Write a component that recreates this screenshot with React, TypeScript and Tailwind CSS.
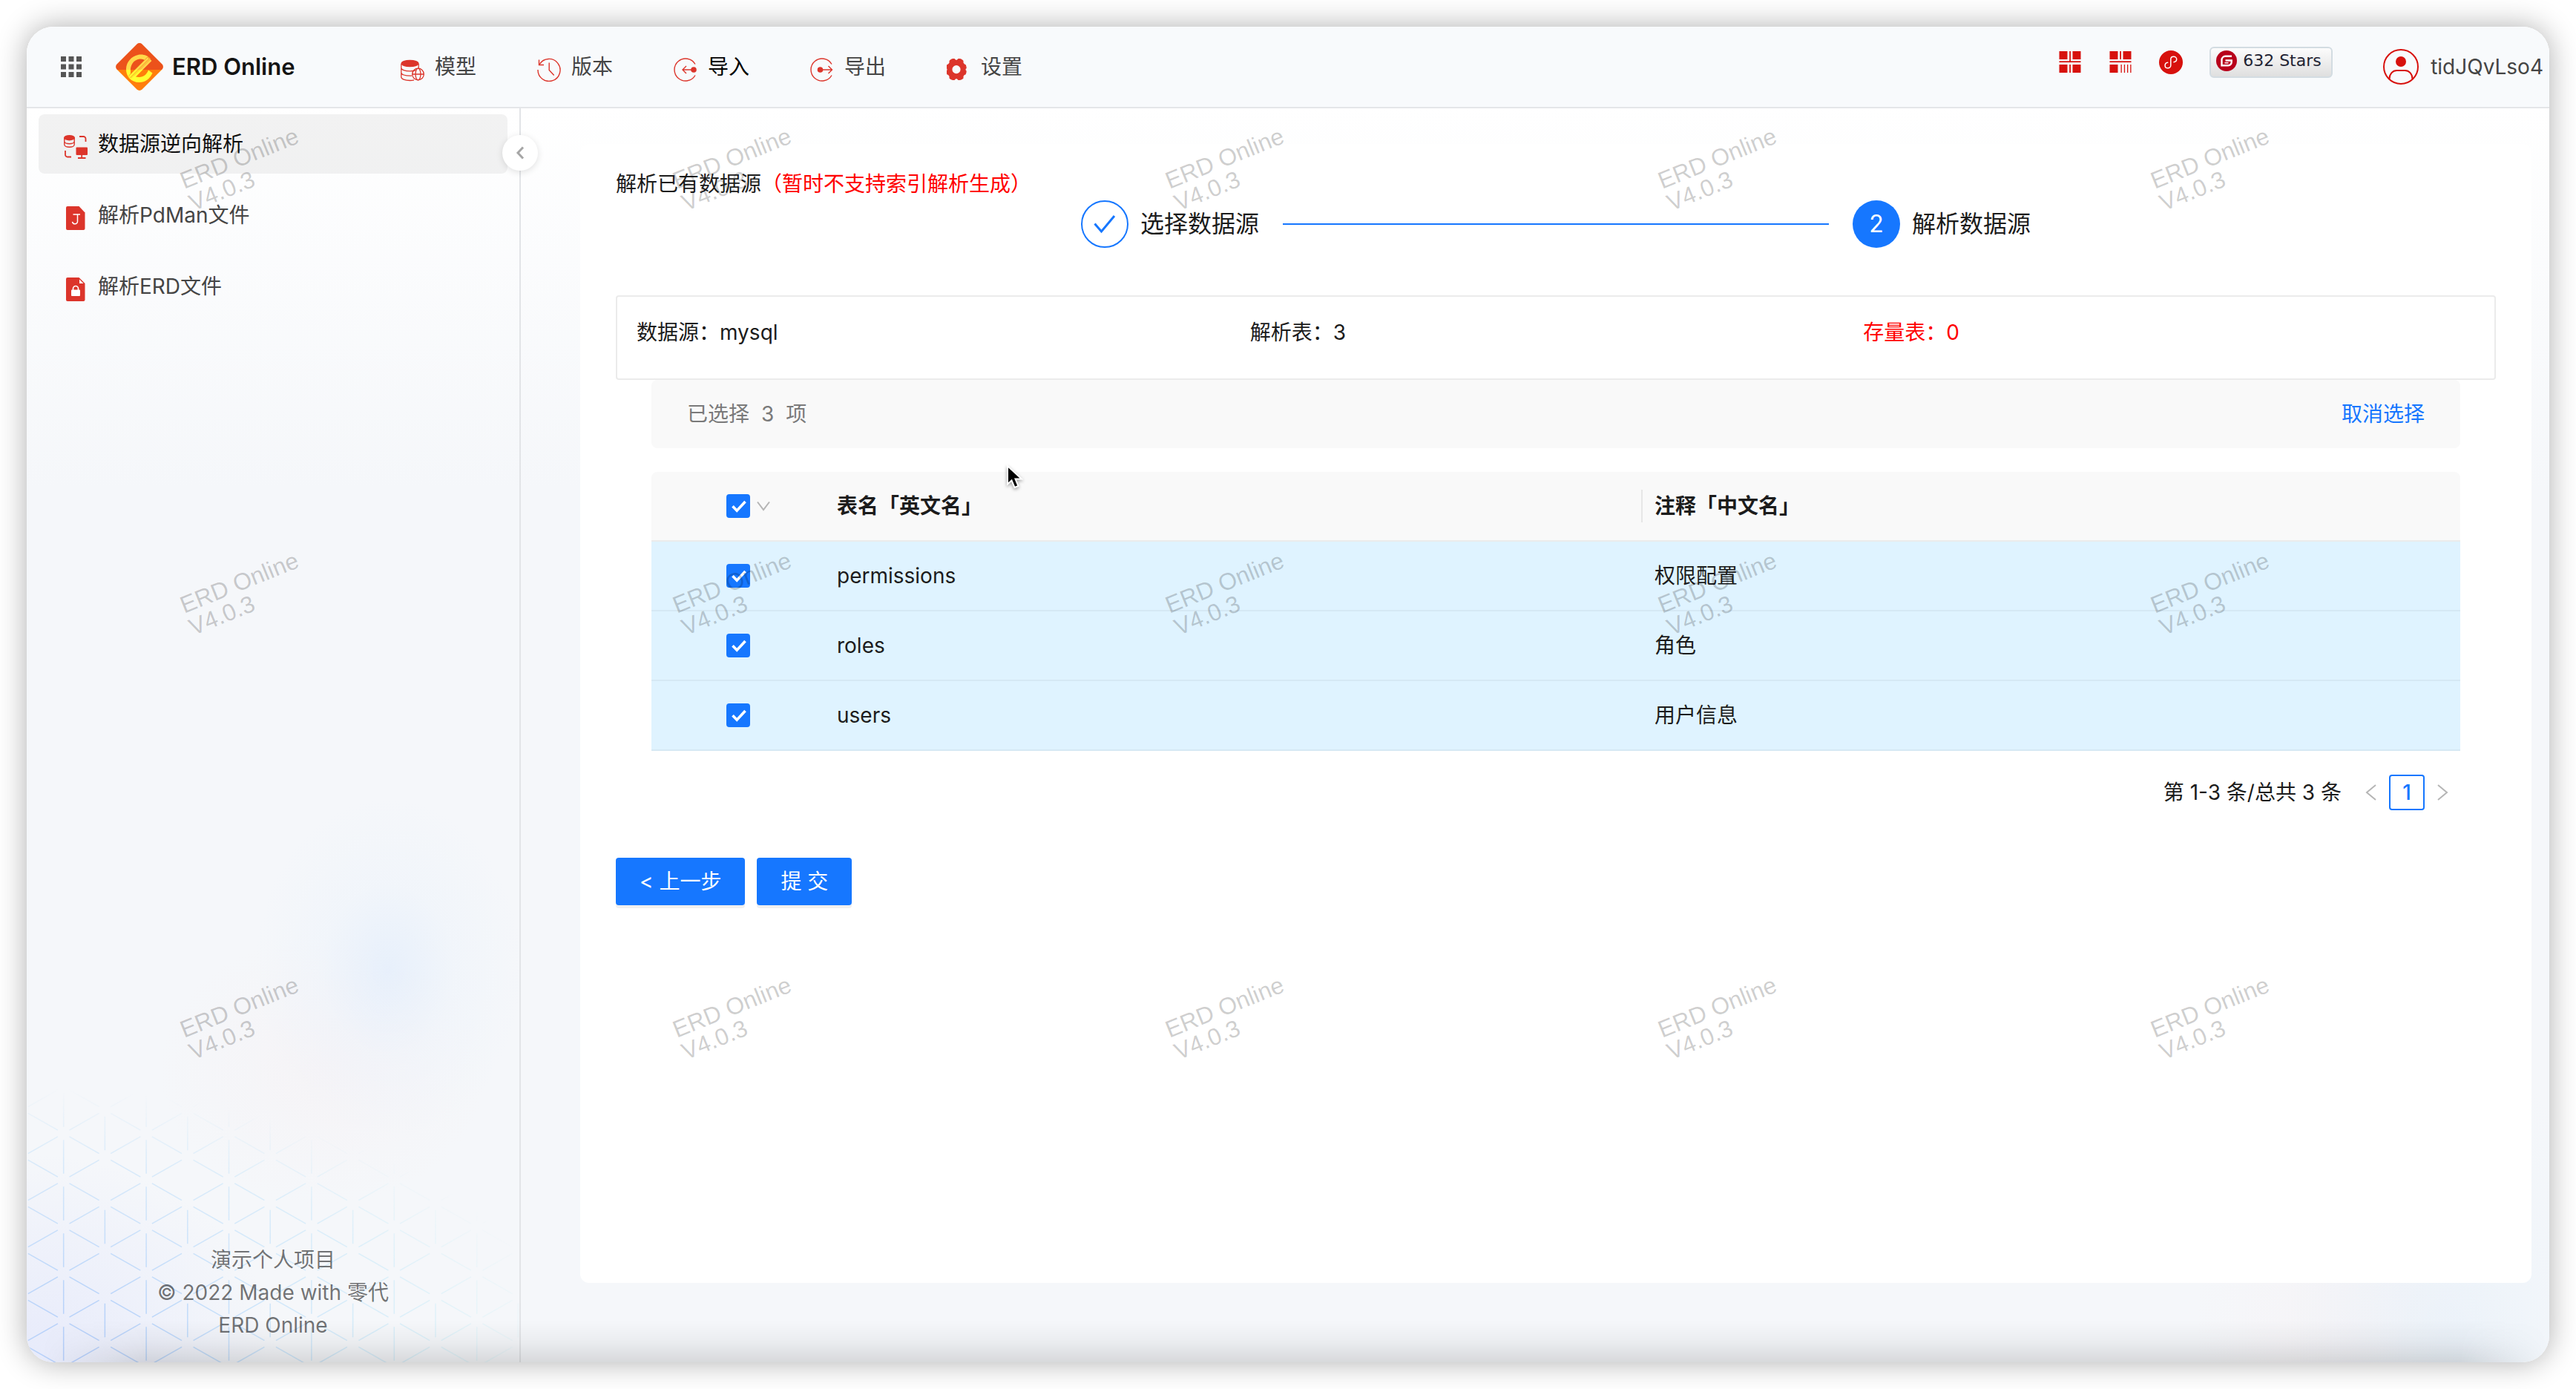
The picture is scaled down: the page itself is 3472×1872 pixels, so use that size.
import React from "react";

type IconProps = { className?: string };

const RED = "#dc352b";

function Logo() {
  return (
    <svg viewBox="0 0 64 64" className="size-16 shrink-0" aria-hidden="true">
      <defs>
        <linearGradient id="logo-bg" x1="0" y1="0" x2="0" y2="64" gradientUnits="userSpaceOnUse">
          <stop offset="0.56" stopColor="#ec521b" />
          <stop offset="0.56" stopColor="#ff7e0b" />
        </linearGradient>
        <linearGradient id="logo-fg" x1="0" y1="0" x2="0" y2="64" gradientUnits="userSpaceOnUse">
          <stop offset="0.56" stopColor="#ffd84a" />
          <stop offset="0.56" stopColor="#ffff32" />
        </linearGradient>
      </defs>
      <path d="M28.5 1.5a5 5 0 0 1 7 0l27 27a5 5 0 0 1 0 7l-27 27a5 5 0 0 1-7 0l-27-27a5 5 0 0 1 0-7z" fill="url(#logo-bg)" />
      <path
        d="M47 21.5C43 16.5 36 14.500 30 16C21 18 14.500 25.500 14 34.500C13.500 45 21 53 31.500 53C39.500 53 46 48.500 49.500 40.500L44 36.500C41.500 42.500 37.500 46 31.500 46C27.800 46 25 44.800 23.200 42.700L19.500 46.500L20 39C19.200 30 24 22.500 32 21.500C35.500 21 38.500 22 40.500 24.500Z"
        fill="url(#logo-fg)"
      />
      <path d="M45 20L19 46" stroke="#f5701a" strokeWidth="5" />
      <path d="M44 20L18.500 45.500M47.500 23L21.500 49" stroke="url(#logo-fg)" strokeWidth="2.600" />
      <path d="M46 21.300L20 47.300" stroke="url(#logo-fg)" strokeWidth="1.200" />
    </svg>
  );
}

function GridDots() {
  return (
    <svg viewBox="0 0 28 28" className="size-7" fill="#555" aria-hidden="true">
      {[0, 10.5, 21].map((y) => [0, 10.5, 21].map((x) => <rect key={`${x}-${y}`} x={x} y={y} width="7" height="7" />))}
    </svg>
  );
}

function DbGlobe() {
  return (
    <svg viewBox="0 0 32 32" className="size-8" fill="none" stroke={RED} strokeWidth="1.3" aria-hidden="true">
      <ellipse cx="12.500" cy="7.500" rx="12" ry="4.800" fill={RED} stroke="none" />
      <path d="M.8 8v18c0 2.500 5 4.500 11.700 4.500 2 0 4-.2 5.600-.600M24.200 8v6M.8 13.500c0 2.500 5 4.300 11.700 4.300 3.300 0 6-.4 8-1.200M.8 20c0 2.400 5 4.200 11.700 4.200h2.500" />
      <circle cx="23.500" cy="22" r="7.800" />
      <ellipse cx="23.500" cy="22" rx="3.500" ry="7.800" />
      <path d="M15.700 22h15.600" />
    </svg>
  );
}

function History() {
  return (
    <svg viewBox="0 0 32 32" className="size-8" fill="none" stroke={RED} strokeWidth="1.4" aria-hidden="true">
      <path d="M3.200 8.600A15 15 0 1 1 1 16" />
      <path d="M2.500 2.500v7h6.500" />
      <path d="M16.200 6.500v10l6.500 7" />
    </svg>
  );
}

function ImportIcon() {
  return (
    <svg viewBox="0 0 32 32" className="size-8" fill="none" stroke={RED} strokeWidth="1.4" aria-hidden="true">
      <path d="M29 8.500a15 15 0 1 0 0 15" />
      <circle cx="27" cy="16" r="3.800" fill={RED} stroke="none" />
      <path d="M24 16H12M17 11l-5 5 5 5" />
    </svg>
  );
}

function ExportIcon() {
  return (
    <svg viewBox="0 0 32 32" className="size-8" fill="none" stroke={RED} strokeWidth="1.4" aria-hidden="true">
      <path d="M29 8.500a15 15 0 1 0 0 15" />
      <circle cx="13.500" cy="16" r="3.800" fill={RED} stroke="none" />
      <path d="M16 16h13M24.500 11l5 5-5 5" />
    </svg>
  );
}

function Gear() {
  return (
    <svg viewBox="1 0 32 32" className="size-8" aria-hidden="true">
      <path
        fill={RED}
        fillRule="evenodd"
        d="M9 1h2.500l1.700 1.800h1.600L16.500 1H19c2 .600 3.500 1.700 4.500 3v2.500c1 1.500 1.700 2.300 3 2.500.700 1.500 1.300 3.200 1.200 5-.8.500-1.200 1-1.200 1.800s.4 1.400 1.200 2c0 1.600-.5 3.200-1.200 4.700-1.500.200-2.300 1-3 2.500V27.500c-1 1.300-2.500 2-4.500 2.500h-2.500l-1.700-1.800h-1.600L11.500 30H9c-2-.5-3.500-1.200-4.500-2.500V25c-.7-1.500-1.500-2.300-3-2.500C.8 21 .3 19.400.3 17.800c.8-.600 1.200-1.200 1.200-2s-.4-1.300-1.200-1.800c0-1.800.500-3.500 1.200-5 1.300-.2 2-1 3-2.500V4C5.500 2.700 7 1.600 9 1zM14 10a5.600 5.600 0 1 0 0 11.200A5.600 5.600 0 0 0 14 10z"
      />
    </svg>
  );
}

function ReverseIcon() {
  return (
    <svg viewBox="0 0 32 32" className="size-8" fill="none" stroke={RED} strokeWidth="1.400" aria-hidden="true">
      <ellipse cx="7.500" cy="3.700" rx="7.500" ry="3.700" fill={RED} stroke="none" />
      <path d="M.8 4v9c0 1.800 3 3.200 6.700 3.200s6.700-1.400 6.700-3.200V4M.8 8.500c0 1.800 3 3.200 6.700 3.200s6.700-1.400 6.700-3.200" />
      <path d="M21 2h5.500a3 3 0 0 1 3 3v4M2 21v5.500a3 3 0 0 0 3 3h5" strokeWidth="1.800" />
      <rect x="16.500" y="16.500" width="15.500" height="10.500" rx="1" fill={RED} stroke="none" />
      <path d="M24.200 26v5M19 31h10.500" strokeWidth="1.800" />
    </svg>
  );
}

function FileJ() {
  return (
    <svg viewBox="0 0 32 32" className="size-8" aria-hidden="true">
      <path d="M5 0h15.500l8 8.500V30a2 2 0 0 1-2 2H5a2 2 0 0 1-2-2V2a2 2 0 0 1 2-2z" fill={RED} />
      <path d="M12.500 11H22M18.500 11v9.500a3.300 3.300 0 0 1-3.300 3.300c-2 0-3.400-1.200-3.700-3" fill="none" stroke="#fff" strokeWidth="1.500" />
    </svg>
  );
}

function FileLock() {
  return (
    <svg viewBox="0 0 32 32" className="size-8" aria-hidden="true">
      <path d="M5 0h15.500l8 8V30a2 2 0 0 1-2 2H5a2 2 0 0 1-2-2V2a2 2 0 0 1 2-2z" fill={RED} />
      <path d="M21 2.500V8h5.500z" fill="#fff" />
      <rect x="10" y="16.500" width="12" height="8.500" rx="1" fill="#fff" />
      <path d="M12.500 17v-2a3.500 3.500 0 0 1 7 0v2" fill="none" stroke="#fff" strokeWidth="1.700" />
    </svg>
  );
}

function Blocks({ bars }: { bars?: boolean }) {
  return (
    <svg viewBox="0 0 32 32" className="size-8" fill="#d7110d" aria-hidden="true">
      <rect x="1.500" y="1" width="11" height="11" />
      <rect x="19.500" y="1" width="11" height="11" />
      <rect x="1.500" y="19" width="11" height="11" />
      <rect x="1.500" y="14.300" width="29" height="1.800" />
      <rect x="15.200" y="1" width="1.800" height={bars ? 11 : 14} />
      {bars ? (
        <>
          <rect x="16.500" y="19" width="1.300" height="11" />
          <rect x="20.800" y="19" width="1.300" height="11" />
          <rect x="25" y="19" width="1.300" height="11" />
          <rect x="29.200" y="19" width="1.300" height="11" />
        </>
      ) : (
        <>
          <rect x="19.500" y="19" width="11" height="11" />
          <rect x="15.200" y="19" width="1.800" height="11" />
        </>
      )}
    </svg>
  );
}

function MiniProgram() {
  return (
    <svg viewBox="0 0 32 32" className="size-8" aria-hidden="true">
      <circle cx="16" cy="16" r="16" fill="#d7110d" />
      <path
        d="M20 15.700c2-.3 3.700-1.700 3.700-3.900 0-2-1.800-3.600-4-3.600-2.300 0-3.900 1.600-3.900 3.600v8.300c0 2.100-1.700 3.700-3.900 3.700s-3.800-1.600-3.800-3.600c0-2.100 1.500-3.600 3.600-3.900"
        fill="none"
        stroke="#fff"
        strokeWidth="1.500"
        strokeLinecap="round"
      />
    </svg>
  );
}

function Gitee() {
  return (
    <svg viewBox="0 0 28 28" className="size-7" aria-hidden="true">
      <circle cx="14" cy="14" r="14" fill="#b8001b" />
      <path d="M21 7.800h-8.500a5 5 0 0 0-5 5v7.400h8.700a4.500 4.500 0 0 0 4.500-4.500v-2.200h-8.200" fill="none" stroke="#fff" strokeWidth="2.400" />
      <path d="M11.500 16.700h5" stroke="#fff" strokeWidth="1.500" />
    </svg>
  );
}

function Avatar() {
  return (
    <svg viewBox="0 0 48 48" className="size-12" fill="none" stroke="#d7110d" strokeWidth="2" aria-hidden="true">
      <circle cx="24" cy="24" r="23" />
      <circle cx="24" cy="17" r="7" fill="#d7110d" stroke="none" />
      <path d="M8.500 40.500c0-7 4.500-11.500 10-11.500h11c5.500 0 10 4.500 10 11.500" />
    </svg>
  );
}

function Chevron({ className = "", d }: IconProps & { d: string }) {
  return (
    <svg viewBox="0 0 24 24" className={className} fill="none" stroke="currentColor" strokeWidth="2" aria-hidden="true">
      <path d={d} />
    </svg>
  );
}

function Pattern() {
  const h = 370;
  const dx = 55.7;
  const s = 63;
  const gap = 0.14;
  const lines: number[][] = [];
  const add = (x1: number, y1: number, x2: number, y2: number) =>
    lines.push([x1 + (x2 - x1) * gap, y1 + (y2 - y1) * gap, x2 - (x2 - x1) * gap, y2 - (y2 - y1) * gap]);
  for (let k = -1; k < 12; k++) {
    const odd = Math.abs(k) % 2 === 1;
    const x = -6 + dx * (k + 1);
    for (let m = -2; m < 6; m++) {
      const y = h - (odd ? 25 : 56.5) - s * m;
      if (!odd || Math.abs(m) % 2 === 0) add(x, y, x, y - s);
      add(x, y, x + dx, y - s / 2);
      add(x, y, x + dx, y + s / 2);
    }
  }
  return (
    <svg
      width="664"
      height={h}
      viewBox={`0 0 664 ${h}`}
      className="pointer-events-none absolute bottom-0 left-0 [mask-image:radial-gradient(ellipse_110%_100%_at_0%_100%,#000_30%,rgba(0,0,0,.6)_75%,transparent)]"
      aria-hidden="true"
    >
      <defs>
        <radialGradient id="mesh" cx="60" cy={h} r="620" gradientUnits="userSpaceOnUse">
          <stop offset="0" stopColor="#b4cdf9" />
          <stop offset="0.45" stopColor="#c6e2fa" />
          <stop offset="1" stopColor="#d2f4f8" />
        </radialGradient>
      </defs>
      <g stroke="url(#mesh)" strokeWidth="1.500">
        {lines.map(([x1, y1, x2, y2], i) => (
          <path key={i} d={`M${x1} ${y1}L${x2 + 0.01} ${y2}`} />
        ))}
      </g>
    </svg>
  );
}

function Check({ label }: { label: string }) {
  return (
    <label className="relative inline-grid size-8 place-items-center">
      <input
        type="checkbox"
        defaultChecked
        aria-label={label}
        className="peer col-start-1 row-start-1 size-8 appearance-none rounded-sm border-2 border-[#d9d9d9] bg-white checked:border-[#1677ff] checked:bg-[#1677ff]"
      />
      <svg
        viewBox="0 0 32 32"
        className="pointer-events-none invisible col-start-1 row-start-1 size-8 peer-checked:visible"
        fill="none"
        stroke="#fff"
        strokeWidth="3.600"
        aria-hidden="true"
      >
        <path d="M8.500 16.200l5.700 6L25.500 10" />
      </svg>
    </label>
  );
}

const navItems = [
  { label: "模型", icon: <DbGlobe /> },
  { label: "版本", icon: <History /> },
  { label: "导入", icon: <ImportIcon />, active: true },
  { label: "导出", icon: <ExportIcon /> },
  { label: "设置", icon: <Gear /> },
];

const sideItems = [
  { label: "数据源逆向解析", icon: <ReverseIcon />, active: true },
  { label: "解析PdMan文件", icon: <FileJ /> },
  { label: "解析ERD文件", icon: <FileLock /> },
];

const rows = [
  ["permissions", "权限配置"],
  ["roles", "角色"],
  ["users", "用户信息"],
];

function Header() {
  return (
    <header className="relative flex h-[110px] shrink-0 items-center border-b-2 border-[#e4e6e9] bg-[#f8fafc] pl-[46px] pr-2">
      <div className="flex w-[458px] shrink-0 items-center">
        <button type="button" aria-label="应用" className="mr-[46px]">
          <GridDots />
        </button>
        <a href="#" className="flex items-center gap-3 whitespace-nowrap text-[31px] font-semibold text-[#141414]">
          <Logo />
          ERD Online
        </a>
      </div>
      <nav className="flex gap-[82px]">
        {navItems.map((n) => (
          <a
            key={n.label}
            href="#"
            className={n.active ? "flex items-center gap-[14px] whitespace-nowrap text-black" : "flex items-center gap-[14px] whitespace-nowrap text-[#454545]"}
          >
            <span className="mt-2">{n.icon}</span>
            {n.label}
          </a>
        ))}
      </nav>
      <div className="ml-auto flex items-center">
        <div className="mr-[68px] flex items-center gap-9 pb-3">
          <button type="button" aria-label="面板"><Blocks /></button>
          <button type="button" aria-label="统计"><Blocks bars /></button>
          <button type="button" aria-label="小程序"><MiniProgram /></button>
          <a
            href="#"
            className="flex h-[42px] w-[166px] items-center gap-2 whitespace-nowrap rounded-md border-2 border-[#d3dce2] bg-linear-to-b from-[#fcfcfc] to-[#dfdfdf] pb-1 pl-[7px] font-['DejaVu_Sans',sans-serif] text-[22px] text-[#1f2433]"
          >
            <Gitee />
            632 Stars
          </a>
        </div>
        <button type="button" className="flex items-center gap-4 text-[#454545]">
          <Avatar />
          tidJQvLso4
        </button>
      </div>
    </header>
  );
}

function Sidebar() {
  return (
    <aside className="relative flex w-[666px] shrink-0 flex-col border-r-2 border-[#e2e4e7] px-4 pt-2">
      <Pattern />
      <nav className="flex flex-col gap-4">
        {sideItems.map((s) => (
          <a
            key={s.label}
            href="#"
            className={
              s.active
                ? "flex h-20 items-center gap-[14px] rounded-lg bg-black/5 pl-[34px] text-[#111]"
                : "flex h-20 items-center gap-[14px] rounded-lg pl-[34px] text-[#454545]"
            }
          >
            <span className="mt-2">{s.icon}</span>
            {s.label}
          </a>
        ))}
      </nav>
      <button
        type="button"
        aria-label="收起"
        className="absolute -right-[25px] top-9 z-10 flex size-12 items-center justify-center rounded-full bg-white text-[#a6a6a6] shadow-[0_2px_10px_rgba(0,0,0,0.12)]"
      >
        <Chevron className="size-6 stroke-3" d="M16 4.500L9 12l7 7.500" />
      </button>
      <footer className="relative mt-auto pb-7 text-center leading-[44px] text-black/55">
        <p>演示个人项目</p>
        <p>© 2022 Made with 零代</p>
        <p>ERD Online</p>
      </footer>
    </aside>
  );
}

function Steps() {
  return (
    <ol className="mx-auto flex w-[1280px] items-center text-[32px]">
      <li className="flex items-center gap-4 whitespace-nowrap">
        <span className="flex size-16 items-center justify-center rounded-full border-2 border-[#1677ff]">
          <svg viewBox="0 0 32 32" className="size-8" fill="none" stroke="#1677ff" strokeWidth="3" aria-hidden="true">
            <path d="M2.500 15.500l9 10.500L29 5" />
          </svg>
        </span>
        选择数据源
      </li>
      <li aria-hidden="true" className="mx-8 h-0.5 flex-1 bg-[#1677ff]" />
      <li className="flex items-center gap-4 whitespace-nowrap">
        <span className="flex size-16 items-center justify-center rounded-full bg-[#1677ff] text-white">2</span>
        解析数据源
      </li>
    </ol>
  );
}

function DataTable() {
  return (
    <table className="mt-8 w-full table-fixed border-separate border-spacing-0 text-left">
      <colgroup>
        <col className="w-[234px]" />
        <col />
        <col />
      </colgroup>
      <thead>
        <tr className="h-[94px] bg-[#f9f9f9] [&>th]:border-b-2 [&>th]:border-[#ebebeb]">
          <th className="rounded-tl-lg p-0">
            <div className="relative mx-auto size-8">
              <Check label="全选" />
              <button type="button" aria-label="选择菜单" className="absolute left-full top-1 ml-1.5 text-[#b5b5b5]">
                <Chevron className="size-6" d="M4 6.500L12 17l8-10.500" />
              </button>
            </div>
          </th>
          <th className="relative px-4 font-semibold after:absolute after:right-0 after:top-6 after:h-11 after:w-0.5 after:bg-[#e6e6e6]">表名「英文名」</th>
          <th className="rounded-tr-lg px-4 font-semibold">注释「中文名」</th>
        </tr>
      </thead>
      <tbody>
        {rows.map(([name, note]) => (
          <tr key={name} className="h-[94px] bg-[#dff3ff] [&>td]:border-b-2 [&>td]:border-[#d5e8f4]">
            <td className="p-0">
              <div className="mx-auto size-8">
                <Check label={name} />
              </div>
            </td>
            <td className="px-4">{name}</td>
            <td className="px-4">{note}</td>
          </tr>
        ))}
      </tbody>
    </table>
  );
}

function Content() {
  return (
    <main className="relative mb-[107px] ml-20 mr-6 mt-12 flex-1 rounded-xl bg-white px-12 pb-12 pt-8 text-[#1c1c1c]">
      <h1 className="leading-[44px]">
        解析已有数据源<span className="text-[#ff0000]">（暂时不支持索引解析生成）</span>
      </h1>
      <Steps />
      <section className="mt-16 grid grid-cols-3 rounded border-2 border-[#ebebeb] pb-10 pl-[26px] pr-6 pt-[26px] leading-[44px]">
        <p>数据源：mysql</p>
        <p>解析表：3</p>
        <p className="text-[#ff0000]">存量表：0</p>
      </section>
      <section className="px-12">
        <div className="flex h-[92px] items-center rounded-lg bg-[#f9f9f9] px-12">
          <p className="flex gap-4 text-[#7a7a7a]">
            <span>已选择</span>
            <span>3</span>
            <span>项</span>
          </p>
          <button type="button" className="ml-auto text-[#1677ff]">取消选择</button>
        </div>
        <DataTable />
        <div className="mt-8 flex h-12 items-center justify-end">
          <p className="mr-4">第 1-3 条/总共 3 条</p>
          <button type="button" aria-label="上一页" className="flex size-12 items-center justify-center text-[#b5b5b5]">
            <Chevron className="size-6" d="M18 2L6 12l12 10" />
          </button>
          <button type="button" className="size-12 rounded border-2 border-[#1677ff] font-medium leading-none text-[#1677ff]">1</button>
          <button type="button" aria-label="下一页" className="flex size-12 items-center justify-center text-[#b5b5b5]">
            <Chevron className="size-6" d="M6 2l12 10L6 22" />
          </button>
        </div>
      </section>
      <div className="mt-16 flex gap-4 text-white">
        <button type="button" className="h-16 rounded bg-[#1677ff] px-8 shadow-[0_4px_0_#f0f0f0]">&lt; 上一步</button>
        <button type="button" className="h-16 rounded bg-[#1677ff] px-8 shadow-[0_4px_0_#f0f0f0]">提 交</button>
      </div>
    </main>
  );
}

function Watermark() {
  return (
    <div
      aria-hidden="true"
      className="pointer-events-none absolute inset-0 z-20 grid grid-cols-[repeat(6,664px)] grid-rows-[repeat(3,572px)] overflow-hidden font-['Liberation_Sans',Arial,sans-serif] text-[32px] leading-8 text-black/20"
    >
      {Array.from({ length: 18 }, (_, i) => (
        <div key={i} className="pl-52 pt-40">
          {i % 6 < 5 && (
            <div className="w-fit -rotate-[22deg] whitespace-nowrap">
              ERD Online
              <br />
              V4.0.3
            </div>
          )}
        </div>
      ))}
    </div>
  );
}

export default function App() {
  return (
    <div className="flex min-h-screen flex-col bg-white p-9 font-['Inter','Noto_Sans_CJK_SC',sans-serif] text-[28px] leading-[44px]">
      <div className="relative flex flex-1 flex-col overflow-clip rounded-[36px] bg-[radial-gradient(ellipse_340px_280px_at_0%_100%,rgba(226,230,251,.75),transparent),radial-gradient(ellipse_180px_230px_at_487px_1271px,rgba(224,236,252,.65),rgba(230,240,252,.25)_50%,transparent),radial-gradient(ellipse_220px_180px_at_400px_1407px,rgba(248,236,238,.3),transparent),radial-gradient(ellipse_220px_440px_at_3260px_100%,rgba(228,240,250,.6),transparent),radial-gradient(ellipse_220px_360px_at_3140px_100%,rgba(248,236,238,.35),transparent),linear-gradient(to_bottom,#ffffff_110px,#f5f7fa_620px)] shadow-[0_0_40px_rgba(0,0,0,0.32)]">
        <Header />
        <div className="flex flex-1">
          <Sidebar />
          <Content />
        </div>
        <div className="pointer-events-none absolute inset-x-0 bottom-0 h-14 bg-linear-to-t from-black/12 via-black/4 to-transparent [mask-image:linear-gradient(to_right,transparent_20px,#000_160px,#000_calc(100%-120px),transparent)]" />
        <Watermark />
      </div>
      <svg viewBox="0 0 24 36" className="absolute left-[1355px] top-[624px] z-30 h-9 w-6 drop-shadow-[0_2px_2px_rgba(0,0,0,0.35)]" aria-hidden="true">
        <path d="M3 4v24.500l5.500-5 4 9.500 5-2-4-9.500H22z" fill="#000" stroke="#fff" strokeWidth="2" />
      </svg>
    </div>
  );
}
